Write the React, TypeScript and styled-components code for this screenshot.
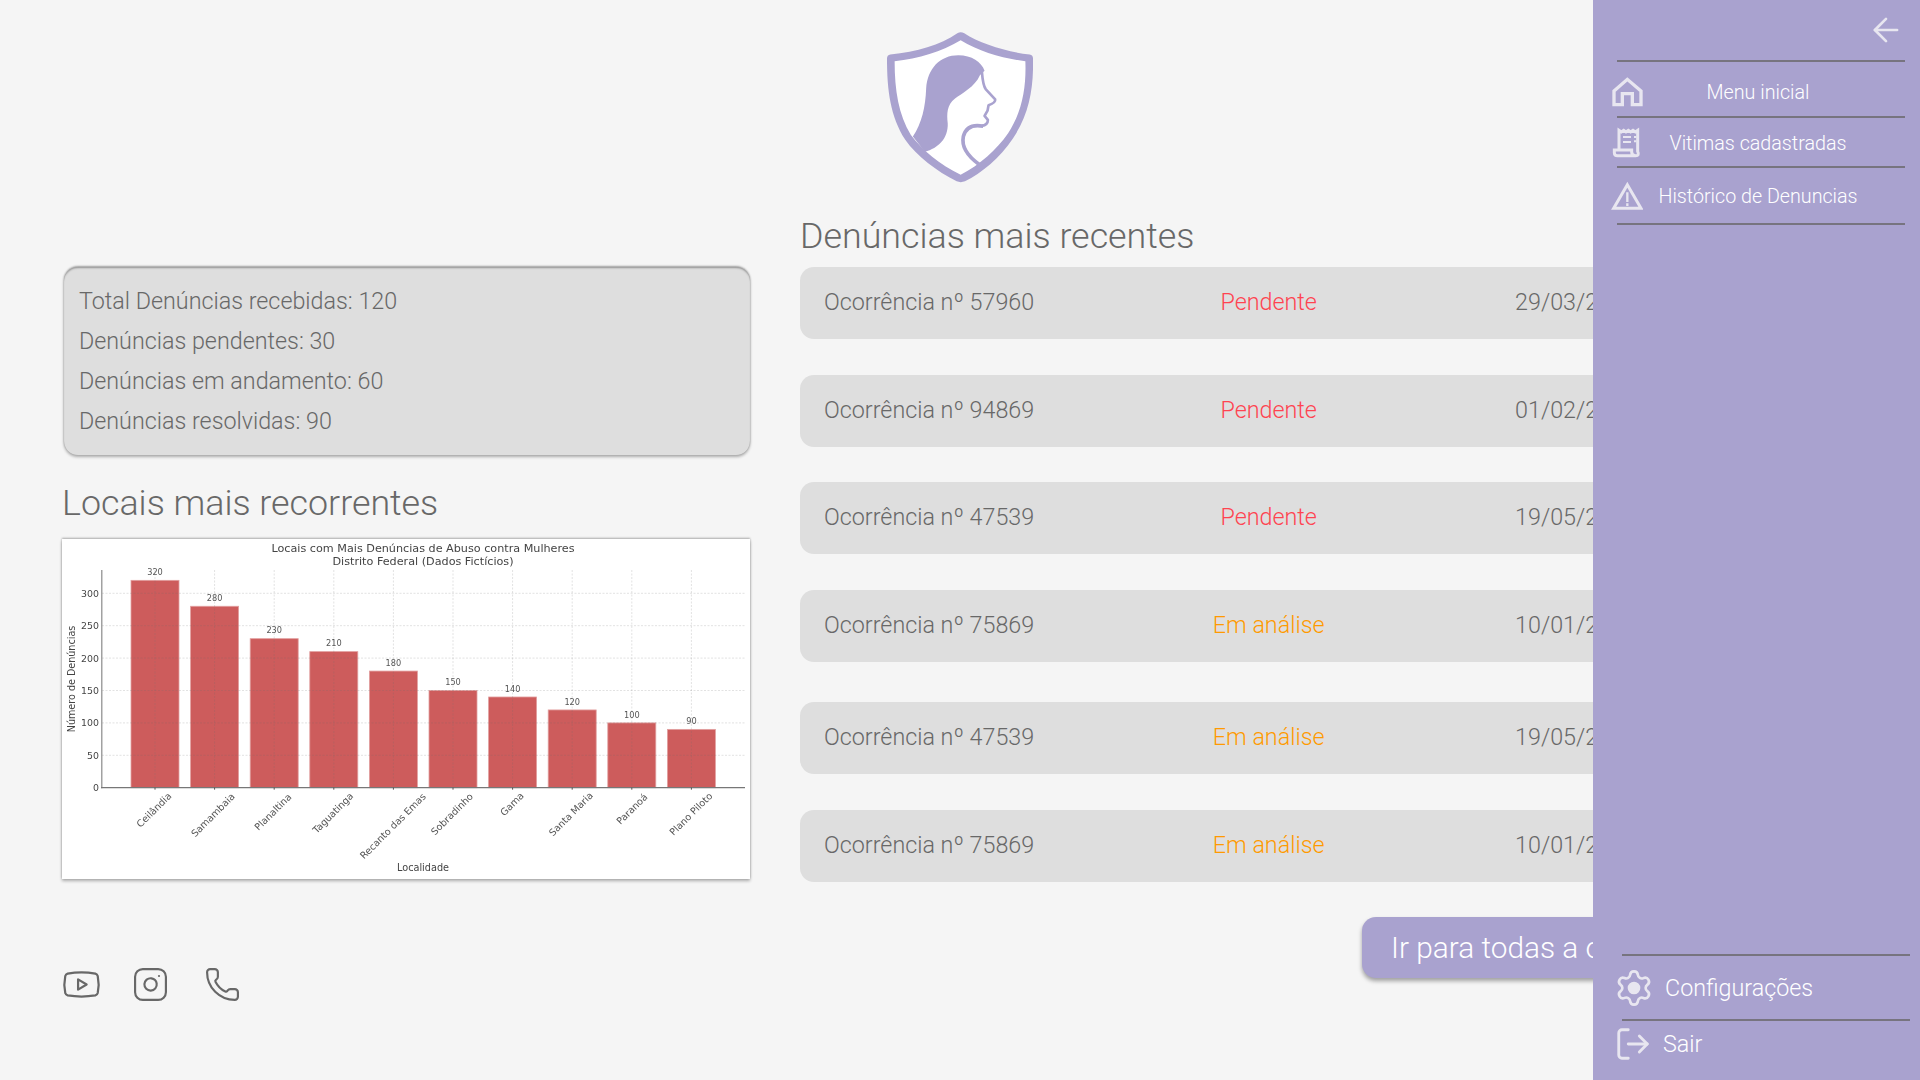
import React from "react";
import styled, { createGlobalStyle } from "styled-components";
import { ArrowLeft, Instagram, LogOut, Phone, Settings, Youtube } from "lucide-react";

const GlobalStyle = createGlobalStyle`
  html, body {
    margin: 0;
    padding: 0;
    background: #f5f5f5;
    font-family: Roboto, "Liberation Sans", sans-serif;
  }
`;

const lilac = "#a9a2cf";
const textGrey = "#686868";
const iconLight = "#e8e6f0";

const Page = styled.div`
  position: relative;
  width: 1920px;
  height: 1080px;
  overflow: hidden;
  background: #f5f5f5;
`;

const Header = styled.header`
  display: flex;
  justify-content: center;
  padding: 32px 0 31px;
`;

const Columns = styled.div`
  display: grid;
  grid-template-columns: 686px 1fr;
  column-gap: 50px;
  padding-left: 64px;
`;

const LeftColumn = styled.section`
  display: flex;
  flex-direction: column;
  padding-top: 53px;
`;

const RightColumn = styled.section`
  display: flex;
  flex-direction: column;
  min-width: 0;
`;

const SummaryCard = styled.div`
  box-sizing: border-box;
  height: 188px;
  padding: 14px 15px;
  background: #dedede;
  border-radius: 14px;
  box-shadow: 0 -1px 2px rgba(0, 0, 0, 0.35), 0 2px 3px rgba(0, 0, 0, 0.3), inset 0 2px 2px -1px rgba(0, 0, 0, 0.35);
`;

const SummaryLine = styled.p`
  margin: 0;
  height: 40px;
  font-size: 23.3px;
  font-weight: 300;
  line-height: 40px;
  color: ${textGrey};
`;

const SectionTitle = styled.h2`
  margin: 0;
  font-size: 35.8px;
  font-weight: 300;
  line-height: 44px;
  color: ${textGrey};
`;

const LeftTitle = styled(SectionTitle)`
  margin: 26px 0 14px -2px;
`;

const ChartFrame = styled.div`
  width: 688px;
  height: 340px;
  margin-left: -2px;
  background: #fff;
  box-shadow: 0 -1px 2px rgba(0, 0, 0, 0.3), 0 2px 3px rgba(0, 0, 0, 0.3);
`;

const ChartSvg = styled.svg`
  display: block;
  filter: blur(0.3px);
  font-family: "DejaVu Sans", sans-serif;
`;

const SocialRow = styled.div`
  display: grid;
  grid-template-columns: 71px 72px auto;
  align-items: center;
  margin: 85px 0 0 -3px;
  color: ${textGrey};
`;

const RecentList = styled.div`
  display: flex;
  flex-direction: column;
  margin-top: 9px;
`;

const ReportRow = styled.div<{ $after: number }>`
  box-sizing: border-box;
  display: flex;
  flex: none;
  justify-content: space-between;
  align-items: center;
  width: 861px;
  height: 72px;
  margin-bottom: ${(props) => props.$after}px;
  padding: 0 24px 3px;
  background: #dedede;
  border-radius: 14px;
  font-size: 23.3px;
  font-weight: 300;
  color: ${textGrey};
`;

const ReportStatus = styled.span<{ $color: string }>`
  margin-right: 12px;
  color: ${(props) => props.$color};
`;

const AllButton = styled.button`
  align-self: flex-start;
  height: 61px;
  margin: 35px 0 0 562px;
  padding: 0 29px;
  border: 0;
  border-radius: 14px;
  background: ${lilac};
  box-shadow: 0 3px 4px rgba(0, 0, 0, 0.35);
  font-family: inherit;
  font-size: 29.8px;
  font-weight: 300;
  color: #fff;
  white-space: nowrap;
`;

const Sidebar = styled.aside`
  position: absolute;
  top: 0;
  right: 0;
  display: flex;
  flex-direction: column;
  width: 327px;
  height: 1080px;
  background: ${lilac};
  color: ${iconLight};
`;

const BackRow = styled.div`
  display: flex;
  justify-content: flex-end;
  height: 60px;
  padding: 11px 15px 0 0;
  box-sizing: border-box;
`;

const Rule = styled.hr`
  flex: none;
  height: 2px;
  width: 288px;
  margin: 0 0 0 24px;
  border: 0;
  background: #77747f;
`;

const NavItem = styled.div<{ $height: number; $top?: number }>`
  box-sizing: border-box;
  display: flex;
  align-items: center;
  height: ${(props) => props.$height}px;
  padding: ${(props) => props.$top ?? 0}px 47px 0 18px;
`;

const NavLabel = styled.span`
  flex: 1;
  text-align: center;
  font-size: 19.7px;
  font-weight: 300;
  color: #fff;
  white-space: nowrap;
`;

const FooterNav = styled.div`
  display: flex;
  flex-direction: column;
  margin-top: auto;
  padding: 0 0 13px 5px;
`;

const FooterItem = styled.div<{ $height: number }>`
  display: flex;
  align-items: center;
  gap: 11px;
  height: ${(props) => props.$height}px;
  padding-left: 16px;
  font-size: 23.3px;
  font-weight: 300;
  color: #fff;
`;

const SolidGear = styled(Settings)`
  color: ${iconLight};
  circle {
    fill: currentColor;
  }
`;

const LightExit = styled(LogOut)`
  color: ${iconLight};
`;

const reports = [
  { id: "57960", status: "Pendente", date: "29/03/2025", after: 36 },
  { id: "94869", status: "Pendente", date: "01/02/2025", after: 35 },
  { id: "47539", status: "Pendente", date: "19/05/2025", after: 36 },
  { id: "75869", status: "Em análise", date: "10/01/2025", after: 40 },
  { id: "47539", status: "Em análise", date: "19/05/2025", after: 36 },
  { id: "75869", status: "Em análise", date: "10/01/2025", after: 0 },
];

const statusColor: Record<string, string> = {
  Pendente: "#ff4350",
  "Em análise": "#ff9a00",
};

const chartData = [
  { name: "Ceilândia", value: 320, lx: 154, ly: 810 },
  { name: "Samambaia", value: 280, lx: 213, ly: 815 },
  { name: "Planaltina", value: 230, lx: 273, ly: 812 },
  { name: "Taguatinga", value: 210, lx: 333, ly: 813 },
  { name: "Recanto das Emas", value: 180, lx: 393, ly: 826 },
  { name: "Sobradinho", value: 150, lx: 452, ly: 814 },
  { name: "Gama", value: 140, lx: 512, ly: 804 },
  { name: "Santa Maria", value: 120, lx: 571, ly: 814 },
  { name: "Paranoá", value: 100, lx: 632, ly: 809 },
  { name: "Plano Piloto", value: 90, lx: 691, ly: 814 },
];

const baseY = 787.7;
const unit = 0.648;
const barX = (i: number) => 155 + i * 59.6;

const Logo = () => (
  <svg width="146" height="151" viewBox="140 65 440 455">
    <path
      fill={lilac}
      d="M352 69 Q362 63 373 69 C420 100 500 125 570 133 Q580 135 580 145 C582 230 570 310 520 385 C480 445 425 490 375 515 Q362 520 350 515 C290 485 230 440 195 390 C150 320 140 240 140 145 Q140 135 150 133 C230 125 300 105 352 69 Z"
    />
    <path
      fill="#fff"
      d="M362 90 C420 125 490 145 557 153 C560 230 548 305 505 370 C470 420 420 465 362 495 C300 465 245 420 212 375 C175 315 163 240 163 153 C235 145 305 125 362 90 Z"
    />
    <path
      fill={lilac}
      d="M218 380 C245 340 256 290 258 235 C262 175 300 135 355 135 C395 135 425 155 434 182 L420 195 C405 230 365 250 345 265 C320 285 320 310 323 340 C325 385 295 415 254 426 Z"
    />
    <path
      fill="none"
      stroke={lilac}
      strokeWidth="8"
      strokeLinejoin="round"
      d="M426 186 C428 210 430 228 438 238 L466 268 Q468 278 446 286 L443 302 L434 318 L444 330 Q444 345 425 348"
    />
    <path
      fill="none"
      stroke={lilac}
      strokeWidth="11"
      d="M430 349 C400 343 378 350 370 380 C364 410 385 440 418 464"
    />
  </svg>
);

const Chart = () => (
  <ChartSvg width="688" height="340" viewBox="62 539 688 340">
    {chartData.map((d, i) => (
      <rect
        key={d.name}
        x={barX(i) - 24}
        y={baseY - d.value * unit}
        width="48"
        height={d.value * unit}
        fill="#cd5c5c"
        stroke="#e2a0a0"
        strokeWidth="0.8"
      />
    ))}
    {[50, 100, 150, 200, 250, 300].map((v) => (
      <line
        key={v}
        x1="102"
        x2="745"
        y1={baseY - v * unit}
        y2={baseY - v * unit}
        stroke="rgba(110,110,110,0.25)"
        strokeDasharray="2 1.5"
        strokeWidth="0.8"
      />
    ))}
    {chartData.map((d, i) => (
      <line
        key={d.name}
        x1={barX(i)}
        x2={barX(i)}
        y1="570"
        y2={baseY}
        stroke="rgba(110,110,110,0.25)"
        strokeDasharray="2 1.5"
        strokeWidth="0.8"
      />
    ))}
    <line x1="101.8" x2="101.8" y1="570" y2={baseY + 0.5} stroke="#8a8a8a" strokeWidth="1.2" />
    <line x1="101" x2="745" y1={baseY} y2={baseY} stroke="#777" strokeWidth="1.2" />
    {chartData.map((d, i) => (
      <line key={d.name} x1={barX(i)} x2={barX(i)} y1={baseY} y2={baseY + 2} stroke="#333" strokeWidth="0.8" />
    ))}
    {[0, 50, 100, 150, 200, 250, 300].map((v) => (
      <text key={v} x="99" y={baseY - v * unit + 3.4} textAnchor="end" fontSize="9.4" fill="#444">
        {v}
      </text>
    ))}
    {chartData.map((d, i) => (
      <text
        key={d.name}
        x={barX(i)}
        y={baseY - d.value * unit - 5.3}
        textAnchor="middle"
        fontSize="8.2"
        fill="#555"
      >
        {d.value}
      </text>
    ))}
    {chartData.map((d) => (
      <text
        key={d.name}
        x={d.lx}
        y={d.ly + 3.3}
        textAnchor="middle"
        fontSize="9.6"
        fill="#555"
        transform={`rotate(-45 ${d.lx} ${d.ly})`}
      >
        {d.name}
      </text>
    ))}
    <text x="423" y="551.5" textAnchor="middle" fontSize="11.2" fill="#444">
      Locais com Mais Denúncias de Abuso contra Mulheres
    </text>
    <text x="423" y="564.5" textAnchor="middle" fontSize="11.2" fill="#444">
      Distrito Federal (Dados Fictícios)
    </text>
    <text x="423" y="871" textAnchor="middle" fontSize="9.7" fill="#444">
      Localidade
    </text>
    <text
      x="71.5"
      y="682.3"
      textAnchor="middle"
      fontSize="9.6"
      fill="#444"
      transform="rotate(-90 71.5 679)"
    >
      Número de Denúncias
    </text>
  </ChartSvg>
);

const HomeIcon = () => (
  <svg width="32" height="32" viewBox="64 230 96 96" fill="none" stroke={iconLight} strokeWidth="10">
    <path d="M73 316 V275 L113 240 L154 275 V316 H128 V283 H98 V316 Z" />
  </svg>
);

const ReceiptIcon = () => (
  <svg width="32" height="32" viewBox="60 375 96 96" fill="none" stroke={iconLight} strokeWidth="9">
    <path d="M84 444 V385 l7 5 7-5 7 5 7-5 7 5 7-5 7 5 7-5 V448 Q146 461 134 461 H80 Q70 461 70 452 V444 H122 V450 Q122 461 134 461" />
    <path d="M96 405 H120 M96 420 H120 M129 405 H136 M129 418 H136" strokeWidth="6" />
  </svg>
);

const AlertIcon = () => (
  <svg width="32" height="32" viewBox="62 538 96 96" fill="none" stroke={iconLight} strokeWidth="9">
    <path d="M111 552 L152 623 H70 Z" />
    <path d="M111 575 V604 M111 608 V616" strokeWidth="7" />
  </svg>
);

const App: React.FC = () => {
  return (
    <Page>
      <GlobalStyle />
      <Header>
        <Logo />
      </Header>
      <Columns>
        <LeftColumn>
          <SummaryCard>
            <SummaryLine>Total Denúncias recebidas: 120</SummaryLine>
            <SummaryLine>Denúncias pendentes: 30</SummaryLine>
            <SummaryLine>Denúncias em andamento: 60</SummaryLine>
            <SummaryLine>Denúncias resolvidas: 90</SummaryLine>
          </SummaryCard>
          <LeftTitle>Locais mais recorrentes</LeftTitle>
          <ChartFrame>
            <Chart />
          </ChartFrame>
          <SocialRow>
            <Youtube size={41} strokeWidth={1.3} />
            <Instagram size={37} strokeWidth={1.4} />
            <Phone size={37} strokeWidth={1.4} />
          </SocialRow>
        </LeftColumn>
        <RightColumn>
          <SectionTitle>Denúncias mais recentes</SectionTitle>
          <RecentList>
            {reports.map((report, i) => (
              <ReportRow key={i} $after={report.after}>
                <span>Ocorrência nº {report.id}</span>
                <ReportStatus $color={statusColor[report.status]}>{report.status}</ReportStatus>
                <span>{report.date}</span>
              </ReportRow>
            ))}
          </RecentList>
          <AllButton>Ir para todas a ocorrências</AllButton>
        </RightColumn>
      </Columns>
      <Sidebar>
        <BackRow>
          <ArrowLeft size={38} strokeWidth={1.7} />
        </BackRow>
        <Rule />
        <NavItem $height={54} $top={6}>
          <HomeIcon />
          <NavLabel>Menu inicial</NavLabel>
        </NavItem>
        <Rule />
        <NavItem $height={48} $top={2}>
          <ReceiptIcon />
          <NavLabel>Vitimas cadastradas</NavLabel>
        </NavItem>
        <Rule />
        <NavItem $height={55} $top={1}>
          <AlertIcon />
          <NavLabel>Histórico de Denuncias</NavLabel>
        </NavItem>
        <Rule />
        <FooterNav>
          <Rule />
          <FooterItem $height={63}>
            <SolidGear size={40} strokeWidth={1.6} />
            Configurações
          </FooterItem>
          <Rule />
          <FooterItem $height={46}>
            <LightExit size={38} strokeWidth={1.8} />
            Sair
          </FooterItem>
        </FooterNav>
      </Sidebar>
    </Page>
  );
};

export default App;
